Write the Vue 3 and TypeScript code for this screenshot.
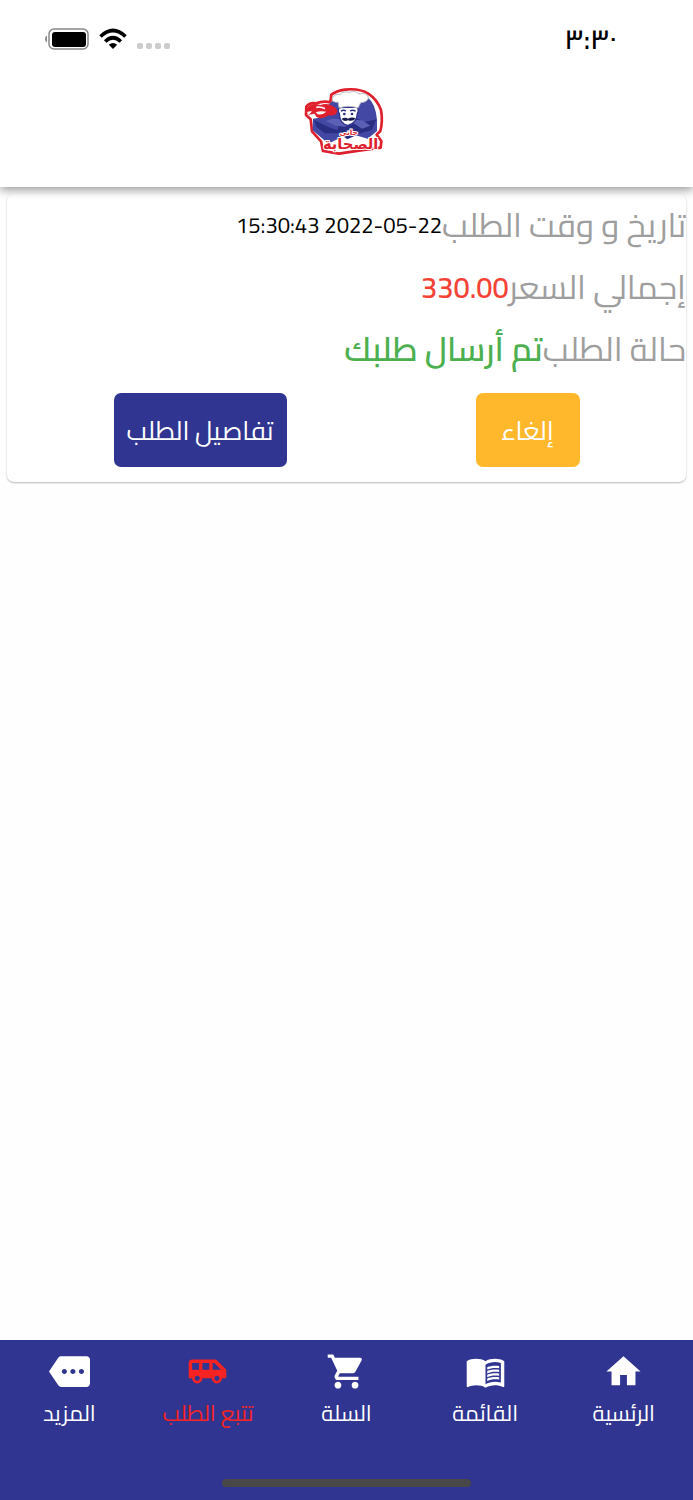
<script setup lang="ts">
interface Tab {
  label: string
  path: string
  active?: boolean
}

const tabs: Tab[] = [
  { label: 'الرئسية', path: 'M10 20v-6h4v6h5v-8h3L12 3 2 12h3v8z' },
  {
    label: 'القائمة',
    path: 'M21 5c-1.11-.35-2.33-.5-3.5-.5-1.95 0-4.05.4-5.5 1.5-1.45-1.1-3.55-1.5-5.5-1.5S2.45 4.9 1 6v14.65c0 .25.25.5.5.5.1 0 .15-.05.25-.05C3.1 20.45 5.05 20 6.5 20c1.95 0 4.05.4 5.5 1.5 1.35-.85 3.8-1.5 5.5-1.5 1.65 0 3.35.3 4.75 1.05.1.05.15.05.25.05.25 0 .5-.25.5-.5V6c-.6-.45-1.25-.75-2-1zm0 13.5c-1.1-.35-2.3-.5-3.5-.5-1.7 0-4.15.65-5.5 1.5V8c1.35-.85 3.8-1.5 5.5-1.5 1.2 0 2.4.15 3.5.5v11.5zM13 9.5c2-.9 4.5-1.1 7-.7v1.3c-2.5-.4-5-.2-7 .8zM13 11.7c2-.9 4.5-1.1 7-.7v1.3c-2.5-.4-5-.2-7 .8zM13 13.9c2-.9 4.5-1.1 7-.7v1.3c-2.5-.4-5-.2-7 .8zM13 16.1c2-.9 4.5-1.1 7-.7v1.3c-2.5-.4-5-.2-7 .8z',
  },
  {
    label: 'السلة',
    path: 'M7 18c-1.1 0-1.99.9-1.99 2S5.9 22 7 22s2-.9 2-2-.9-2-2-2zM1 2v2h2l3.6 7.59-1.35 2.45c-.16.28-.25.61-.25.96 0 1.1.9 2 2 2h12v-2H7.42c-.14 0-.25-.11-.25-.25l.03-.12.9-1.63h7.45c.75 0 1.41-.41 1.75-1.03l3.58-6.49c.08-.14.12-.31.12-.48 0-.55-.45-1-1-1H5.21l-.94-2H1zm16 16c-1.1 0-1.99.9-1.99 2s.89 2 1.99 2 2-.9 2-2-.9-2-2-2z',
  },
  {
    label: 'تتبع الطلب',
    active: true,
    path: 'M17 5H3c-1.1 0-2 .89-2 2v9h2c0 1.65 1.34 3 3 3s3-1.35 3-3h5.5c0 1.65 1.34 3 3 3s3-1.35 3-3H23v-5l-6-6zM3 11V7h4v4H3zm3 6.5c-.83 0-1.5-.67-1.5-1.5s.67-1.5 1.5-1.5 1.5.67 1.5 1.5-.67 1.5-1.5 1.5zm7-6.5H9V7h4v4zm4.5 6.5c-.83 0-1.5-.67-1.5-1.5s.67-1.5 1.5-1.5 1.5.67 1.5 1.5-.67 1.5-1.5 1.5zM15 11V7h1l4 4h-5z',
  },
  {
    label: 'المزيد',
    path: 'M22 3H7c-.69 0-1.23.35-1.59.88L0 12l5.41 8.11c.36.53.97.89 1.66.89H22c1.1 0 2-.9 2-2V5c0-1.1-.9-2-2-2zM9 13.5c-.83 0-1.5-.67-1.5-1.5s.67-1.5 1.5-1.5 1.5.67 1.5 1.5-.67 1.5-1.5 1.5zm5 0c-.83 0-1.5-.67-1.5-1.5s.67-1.5 1.5-1.5 1.5.67 1.5 1.5-.67 1.5-1.5 1.5zm5 0c-.83 0-1.5-.67-1.5-1.5s.67-1.5 1.5-1.5 1.5.67 1.5 1.5-.67 1.5-1.5 1.5z',
  },
]
</script>

<template>
  <div class="screen" dir="rtl" lang="ar">
    <header class="top">
      <div class="status">
        <time class="clock">٣:٣٠</time>
        <div class="indicators" dir="ltr">
          <svg class="battery" viewBox="0 0 44 22" aria-hidden="true">
            <path d="M2 7.5Q0 8 0 11t2 3.5z" fill="#888" />
            <rect x="4" y="1" width="39" height="20" rx="5" fill="#fff" stroke="#888" stroke-width="1.5" />
            <rect x="7" y="4" width="34" height="15" rx="3" fill="#000" />
          </svg>
          <svg class="wifi" viewBox="0 0 28 22" fill="none" stroke="#000" stroke-width="3.6" aria-hidden="true">
            <path d="M1.5 8.5Q14-3.5 26.5 8.5" />
            <path d="M6.2 13.5Q14 6 21.8 13.5" />
            <path d="M14 21L9.8 16.8Q14 13 18.2 16.8z" fill="#000" stroke="none" />
          </svg>
          <span class="signal" aria-hidden="true"><i v-for="n in 4" :key="n"></i></span>
        </div>
      </div>
      <div class="brand">
        <svg class="logo" viewBox="25 24 240 204" role="img" aria-label="حاتى الصحابة">
          <path d="M32 80Q42 66 62 70Q82 62 104 67L107 44Q122 33 148 29Q190 24 218 41Q244 58 256 90Q262 125 254 153L243 164L257 183L255 203L190 212L130 221L82 213L76 184L49 154L45 118L31 105z" fill="#fff" stroke="#e01f2d" stroke-width="8" stroke-linejoin="round" />
          <path d="M94 78L112 62L214 50Q240 70 244 119V153L216 176L160 160L98 191L51 151L52 116L90 110z" fill="#4448a5" />
          <path d="M92 93L132 120L126 151L100 142L55 120L62 140L88 160L130 160L155 178L198 158L229 150L242 118L206 126L181 114L166 123L132 121z" fill="#292e82" />
          <path d="M111 116L90 123L120 137L148 140L174 130L199 146L224 137L200 121z" fill="#5c60b5" />
          <path d="M34 84Q48 66 74 75Q98 67 119 83L126 94Q120 110 99 106Q80 120 63 111L56 101L38 105Q48 97 48 93L32 96z" fill="#e01f2d" />
          <path d="M62 82Q76 79 88 86" fill="none" stroke="#fff" stroke-width="5" />
          <path d="M60 97Q74 92 92 95Q80 106 66 103z" fill="#fff" />
          <path d="M132 83Q124 89 131 101Q132 132 157 136Q183 130 185 101Q192 87 182 81z" fill="#fff" stroke="#30358f" stroke-width="4" />
          <path d="M131 84Q127 75 128 67Q108 68 110 55Q115 40 132 44Q143 32 161 37Q178 30 190 42Q213 36 218 52Q218 66 195 68L187 84Q157 74 131 84z" fill="#fff" stroke="#b8bac2" stroke-width="3" />
          <path d="M136 94Q143 88 151 93M163 93Q172 88 180 94" fill="none" stroke="#292e82" stroke-width="4" />
          <circle cx="146" cy="102" r="4" fill="#292e82" />
          <circle cx="169" cy="102" r="4" fill="#292e82" />
          <path d="M138 116Q149 110 157 116Q168 110 180 115Q173 126 157 121Q144 126 138 116z" fill="#171a4d" />
          <g class="logo-text" text-anchor="middle">
            <text x="159" y="166" font-size="22">حاتى</text>
            <text x="165" y="208" font-size="44">الصحابة</text>
          </g>
        </svg>
      </div>
    </header>

    <main class="content">
      <article class="order">
        <p class="row"><span class="name">تاريخ و وقت الطلب</span><time class="date" dir="ltr">15:30:43 2022-05-22</time></p>
        <p class="row"><span class="name">إجمالي السعر</span><span class="price">330.00</span></p>
        <p class="row"><span class="name">حالة الطلب</span><span class="state">تم أرسال طلبك</span></p>
        <div class="actions">
          <button class="btn cancel" type="button">إلغاء</button>
          <button class="btn details" type="button">تفاصيل الطلب</button>
        </div>
      </article>
    </main>

    <nav class="tabs">
      <div class="tab-list">
        <a v-for="tab in tabs" :key="tab.label" href="#" class="tab" :class="{ active: tab.active }" :aria-current="tab.active ? 'page' : undefined">
          <svg viewBox="0 0 24 24" fill="currentColor" aria-hidden="true"><path :d="tab.path" /></svg>
          <span>{{ tab.label }}</span>
        </a>
      </div>
      <div class="home-bar"></div>
    </nav>
  </div>
</template>

<style>
body {
  margin: 0;
  background: #fff;
}
</style>

<style scoped>
.screen {
  min-height: 100vh;
  display: flex;
  flex-direction: column;
  background: #fefefe;
  font-family: Cairo, "Noto Sans", "DejaVu Sans", sans-serif;
}
.top {
  background: #fff;
  box-shadow: 0 3px 9px rgba(0, 0, 0, 0.4);
  z-index: 1;
}
.status {
  display: flex;
  align-items: center;
  justify-content: space-between;
  height: 78px;
  padding: 0 76px 0 45px;
}
.clock {
  font-size: 28px;
  font-weight: 600;
  line-height: 36px;
  color: #000;
}
.indicators {
  display: flex;
  align-items: center;
  gap: 10px;
}
.battery {
  width: 44px;
  height: 22px;
}
.wifi {
  width: 28px;
  height: 22px;
}
.signal {
  display: flex;
  gap: 3px;
  padding-top: 14px;
}
.signal i {
  width: 6px;
  height: 6px;
  border-radius: 2px;
  background: #ccc;
}
.brand {
  display: flex;
  justify-content: center;
  height: 99px;
  padding: 10px 6px 0 0;
}
.logo {
  width: 80px;
  height: 68px;
  overflow: visible;
}
.logo-text {
  font-family: "DejaVu Sans", sans-serif;
  font-weight: 700;
  fill: #e01f2d;
  stroke: #fff;
  stroke-width: 6px;
  paint-order: stroke;
}
.content {
  flex: 1;
  padding: 7px;
}
.order {
  border-radius: 7px;
  background: #fff;
  padding-bottom: 15px;
  box-shadow: 0 1px 2px rgba(0, 0, 0, 0.28);
}
.row {
  display: flex;
  align-items: center;
  height: 62px;
  margin: 0;
  white-space: nowrap;
}
.name {
  font-size: 33px;
  line-height: 60px;
  color: #9e9e9e;
}
.date {
  font-size: 22px;
  color: #000;
}
.price {
  font-size: 29px;
  font-weight: 600;
  color: #f44336;
}
.state {
  font-size: 33px;
  line-height: 60px;
  font-weight: 600;
  color: #4caf50;
}
.actions {
  display: flex;
  justify-content: space-around;
  padding: 13px 12px 0;
}
.btn {
  height: 74px;
  border: 0;
  border-radius: 7px;
  color: #fff;
  font-family: inherit;
  font-size: 26px;
  white-space: nowrap;
}
.cancel {
  width: 104px;
  background: #ffb72b;
}
.details {
  width: 173px;
  padding: 0;
  background: #2f3590;
}
.tabs {
  display: flex;
  flex-direction: column;
  justify-content: space-between;
  align-items: center;
  height: 160px;
  background: #2f3590;
}
.tab-list {
  display: flex;
  width: 100%;
  padding-top: 11px;
}
.tab {
  flex: 1;
  display: flex;
  flex-direction: column;
  align-items: center;
  gap: 3px;
  color: #fff;
  text-decoration: none;
  font-size: 22px;
  line-height: 36px;
  white-space: nowrap;
}
.tab svg {
  width: 41px;
  height: 41px;
}
.tab.active {
  color: #f72323;
}
.home-bar {
  width: 36%;
  height: 8px;
  margin-bottom: 13px;
  border-radius: 4px;
  background: #484848;
}
</style>
